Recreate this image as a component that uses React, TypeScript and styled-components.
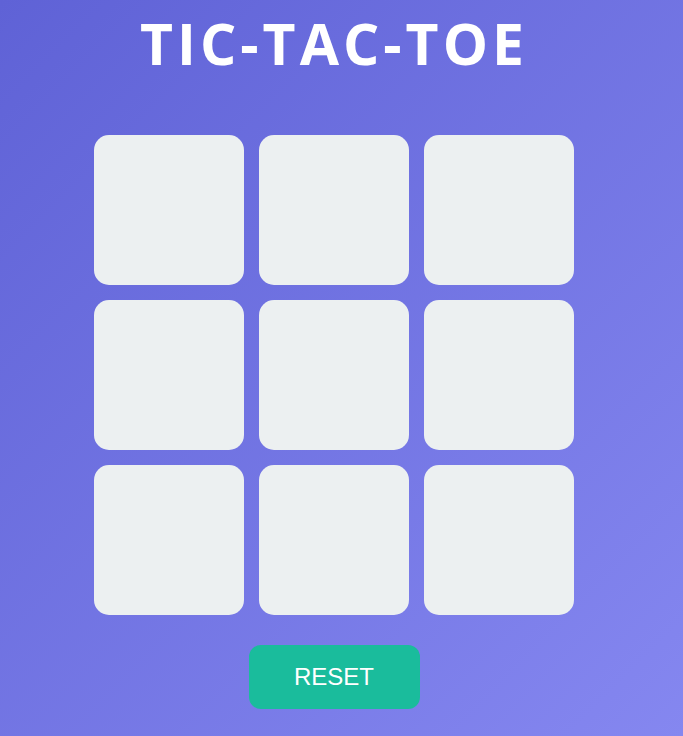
import React from "react";
import styled, { createGlobalStyle } from "styled-components";

const Global = createGlobalStyle`
  html, body { margin: 0; padding: 0; }
  body {
    min-height: 736px;
    background: linear-gradient(135deg, #5f62d6 0%, #8587f0 100%);
    font-family: "Open Sans", "Liberation Sans", sans-serif;
    overflow: hidden;
  }
`;

const Page = styled.div`
  width: 668px;
  min-height: 736px;
  display: flex;
  flex-direction: column;
  align-items: center;
`;

const Title = styled.h1`
  margin: 0;
  height: 88px;
  padding-top: 3px;
  box-sizing: border-box;
  font-family: "Open Sans", sans-serif;
  font-weight: 700;
  font-size: 57px;
  line-height: 80px;
  letter-spacing: 4px;
  color: #ffffff;
`;

const Board = styled.div`
  margin-top: 47px;
  display: grid;
  grid-template-columns: repeat(3, 150px);
  grid-auto-rows: 150px;
  gap: 15px;
`;

const Cell = styled.div`
  background: #ecf0f1;
  border-radius: 15px;
`;

const ResetButton = styled.button`
  margin-top: 30px;
  width: 171px;
  height: 64px;
  border: none;
  border-radius: 12px;
  background: #1abc9c;
  color: #ffffff;
  font-family: "Liberation Sans", Arial, sans-serif;
  font-size: 24px;
  cursor: pointer;
`;

export default function App() {
  return (
    <>
      <Global />
      <Page>
        <Title>TIC-TAC-TOE</Title>
        <Board>
          {Array.from({ length: 9 }).map((_, i) => (
            <Cell key={i} />
          ))}
        </Board>
        <ResetButton>RESET</ResetButton>
      </Page>
    </>
  );
}
